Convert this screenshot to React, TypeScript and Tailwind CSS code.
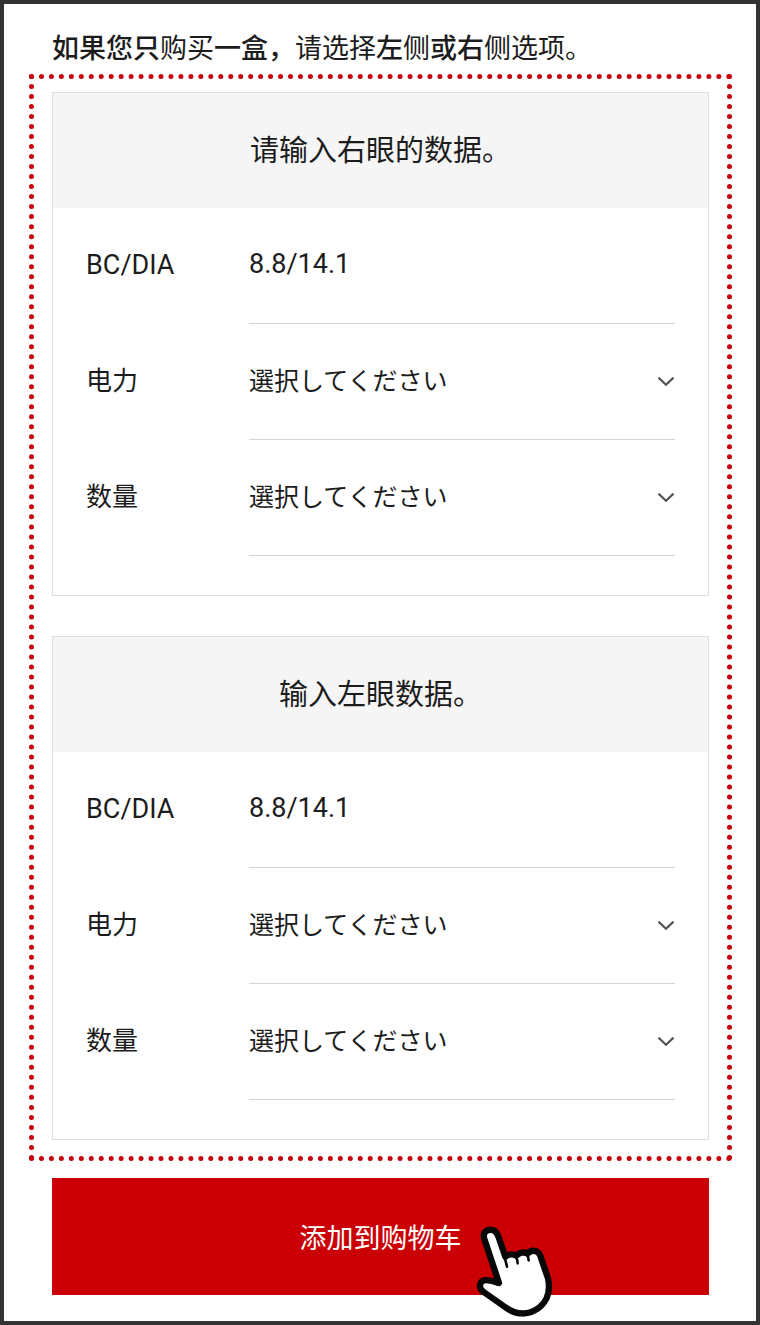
import { useId } from "react";

function Chevron() {
  return (
    <svg
      className="pointer-events-none absolute right-0 top-1/2 h-[10px] w-[18px] -translate-y-1/2"
      viewBox="0 0 18 10"
      fill="none"
      stroke="#555555"
      strokeWidth="2.2"
      aria-hidden="true"
    >
      <path d="M1.5 0.6 L9 7.8 L16.5 0.6" />
    </svg>
  );
}

function HandPointer() {
  return (
    <svg
      className="pointer-events-none absolute left-1/2 top-[47px] ml-[94px] h-[93px] w-[78px]"
      viewBox="42 45 234 279"
      strokeLinecap="round"
      strokeLinejoin="round"
      aria-hidden="true"
    >
      <path
        d="M70 87 C63 66 81 55 98 61 C106 65 110 73 113 82 L133 140 C143 132 156 132 166 137 C175 127 190 125 200 131 C210 118 230 120 237 135 L261 205 C268 238 262 268 238 290 C205 318 165 316 132 291 L68 246 C53 236 54 219 66 212 C78 207 93 213 114 219 Z"
        fill="#ffffff"
        stroke="#080808"
        strokeWidth="19"
      />
      <path
        d="M130 138 L138 170 M163 138 C168 145 170 151 170 160 M196 131 C201 137 203 143 203 151"
        fill="none"
        stroke="#080808"
        strokeWidth="8"
      />
    </svg>
  );
}

const rowClass = "flex h-[116px]";
const labelClass = "flex w-[163px] shrink-0 items-center pb-[2px]";

function SelectRow({ label }: { label: string }) {
  const id = useId();
  return (
    <div className={rowClass}>
      <label htmlFor={id} className={`${labelClass} text-[26px]`}>
        {label}
      </label>
      <div className="relative min-w-0 flex-1 border-b border-[#d4d4d4]">
        <select
          id={id}
          lang="ja"
          className="h-full w-full appearance-none bg-transparent pr-8 font-['Roboto','Noto_Sans_CJK_JP',sans-serif] text-[25px] outline-none"
        >
          <option>選択してください</option>
        </select>
        <Chevron />
      </div>
    </div>
  );
}

function EyeCard({ title }: { title: string }) {
  return (
    <section className="border border-[#dedede] pb-[39px]">
      <h2 className="flex h-[115px] items-center justify-center bg-[#f5f5f5] text-[29px] leading-10">
        {title}
      </h2>
      <div className="px-[33px]">
        <div className={rowClass}>
          <span className={`${labelClass} text-[27px]`}>BC/DIA</span>
          <span className="flex flex-1 items-center border-b border-[#d4d4d4] pb-[2px] text-[27px]">
            8.8/14.1
          </span>
        </div>
        <SelectRow label="电力" />
        <SelectRow label="数量" />
      </div>
    </section>
  );
}

export default function App() {
  return (
    <main
      lang="zh-CN"
      className="min-h-screen border-4 border-[#333333] bg-white px-[25px] pb-[26px] pt-[25px] font-['Roboto','Noto_Sans_CJK_SC',sans-serif] text-[#1c1c1c]"
    >
      <p className="pb-[5px] pl-[23px] text-[27px] leading-10">
        <span className="font-medium">如果您只</span>购买
        <span className="font-medium">一盒，</span>请选择
        <span className="font-medium">左</span>侧
        <span className="font-medium">或右</span>侧选项。
      </p>
      <div className="mr-[-1px] flex flex-col gap-10 border-[5px] border-dotted border-[#c7000b] px-[18px] pb-4 pt-[13px]">
        <EyeCard title="请输入右眼的数据。" />
        <EyeCard title="输入左眼数据。" />
      </div>
      <div className="relative ml-[23px] mr-[22px] mt-[17px]">
        <button
          type="button"
          className="h-[117px] w-full bg-[#cb0004] pt-[6px] text-[27px] text-white"
        >
          添加到购物车
        </button>
        <HandPointer />
      </div>
    </main>
  );
}
